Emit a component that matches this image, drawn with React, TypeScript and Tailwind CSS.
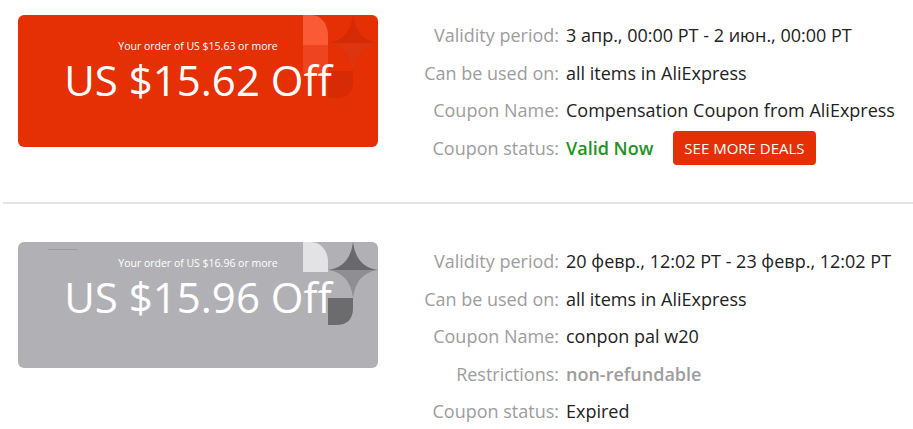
const coupons = [
  {
    min: "US $15.63",
    amount: "US $15.62 Off",
    active: true,
    rows: [
      ["Validity period:", "3 апр., 00:00 PT - 2 июн., 00:00 PT"],
      ["Can be used on:", "all items in AliExpress"],
      ["Coupon Name:", "Compensation Coupon from AliExpress"],
    ],
  },
  {
    min: "US $16.96",
    amount: "US $15.96 Off",
    active: false,
    rows: [
      ["Validity period:", "20 февр., 12:02 PT - 23 февр., 12:02 PT"],
      ["Can be used on:", "all items in AliExpress"],
      ["Coupon Name:", "conpon pal w20"],
    ],
  },
];

const Deco = ({ active }: { active: boolean }) => {
  const c = active
    ? { light: "#fb5a37", mid: "#ee4520", up: "#d42a05", low: "#dc3510", bot: "#d62b05" }
    : { light: "#e3e3e5", mid: "#b1b1b5", up: "#69696c", low: "#8f8f93", bot: "#6c6c6f" };
  return (
    <svg className="absolute top-0 right-0" width="75" height="85" viewBox="0 0 75 85">
      <path d="M0 30 H25 V58 H0 Z" fill={c.mid} />
      <path d="M0 0 H8 C18 0 25 9 25 20 V30 H0 Z" fill={c.light} />
      <path d="M50 0 Q53 25 75 28 L25 28 Q47 25 50 0 Z" fill={c.up} />
      <path d="M25 28 L75 28 Q53 31 50 56 Q47 31 25 28 Z" fill={c.low} />
      <path d="M25 56 H50 V66 Q50 83 33 83 H25 Z" fill={c.bot} />
    </svg>
  );
};

const Row = ({ label, children }: { label: string; children: React.ReactNode }) => (
  <div className="flex h-[37.5px] items-center">
    <div className="w-[181px] shrink-0 text-right text-[#9d9d9d]">{label}</div>
    <div className="ml-[7px] flex items-center text-[#222]">{children}</div>
  </div>
);

export default function App() {
  return (
    <div className="min-h-[429px] w-[913px] overflow-hidden bg-white font-['Open_Sans',sans-serif] text-[18px]">
      {coupons.map((cp, i) => (
        <div key={i}>
          {i > 0 && <div className="ml-[3px] mt-[35px] h-[2px] bg-[#e4e4e4]" />}
          <div className={`flex items-start ${i === 0 ? "pt-[15px]" : "pt-[38px]"}`}>
            <div
              className={`relative ml-[18px] flex w-[360px] shrink-0 flex-col items-center overflow-hidden rounded-[6px] text-white ${
                cp.active ? "h-[132px] bg-[#e52f05] pt-[24px]" : "h-[126px] bg-[#b1b1b5] pt-[14px]"
              }`}
            >
              <Deco active={cp.active} />
              {!cp.active && <div className="absolute left-[30px] top-[7px] h-px w-[30px] bg-[#9c9ca0]" />}
              <div className="relative text-[10.5px] leading-[14px]">Your order of {cp.min} or more</div>
              <div className="relative mt-[5px] text-[42px] leading-[44px]">{cp.amount}</div>
            </div>
            <div className={i === 0 ? "mt-[2px]" : "mt-[1px]"}>
              {cp.rows.map(([l, v]) => (
                <Row key={l} label={l}>
                  {v}
                </Row>
              ))}
              {!cp.active && (
                <Row label="Restrictions:">
                  <span className="font-semibold text-[#9d9d9d]">non-refundable</span>
                </Row>
              )}
              <Row label="Coupon status:">
                {cp.active ? (
                  <>
                    <span className="font-semibold text-[#1f931f]">Valid Now</span>
                    <button className="ml-[20px] h-[34px] rounded-[4px] bg-[#e52f05] px-[11px] text-[15px] text-white">
                      SEE MORE DEALS
                    </button>
                  </>
                ) : (
                  <span>Expired</span>
                )}
              </Row>
            </div>
          </div>
        </div>
      ))}
    </div>
  );
}
